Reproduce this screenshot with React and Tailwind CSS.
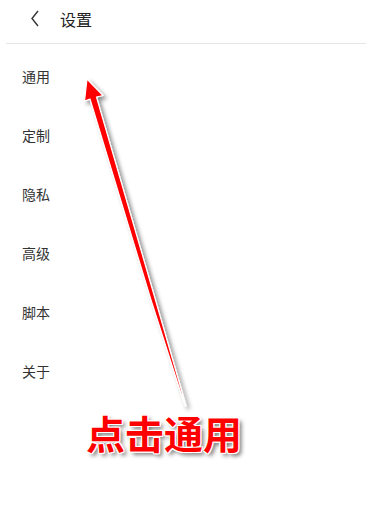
export default function App() {
  const items = ["通用", "定制", "隐私", "高级", "脚本", "关于"];
  return (
    <div
      className="relative w-[376px] h-[512px] bg-white overflow-hidden"
      style={{ fontFamily: '"Noto Sans CJK SC", "Noto Sans", sans-serif' }}
    >
      <div className="pl-[6px] pr-[10px]">
        <div className="h-[44px] pb-[6px] flex items-center border-b border-[#e6e6e6]">
          <svg width="10" height="17" viewBox="0 0 10 17" className="ml-[24px]">
            <polyline points="8,1 2,8.5 8,16" fill="none" stroke="#333" strokeWidth="1.4" />
          </svg>
          <span className="ml-[20px] text-[16px] leading-none text-[#222]">设置</span>
        </div>
        <div className="pt-[3px]">
          {items.map((t) => (
            <div key={t} className="h-[59px] flex items-center pl-[16px] text-[14px] text-[#333]">
              {t}
            </div>
          ))}
        </div>
      </div>

      <svg
        className="absolute left-0 top-0 pointer-events-none"
        width="376"
        height="512"
        viewBox="0 0 376 512"
      >
        <defs>
          <filter id="sh" x="-50%" y="-10%" width="200%" height="120%">
            <feDropShadow dx="3" dy="3" stdDeviation="2" floodColor="#000" floodOpacity="0.45" />
          </filter>
        </defs>
        <polygon
          points="87,79 103,95.5 96.5,97 155.5,300 186,406 185,406 151,300 90,99 84.5,101"
          fill="#ff0000"
          stroke="#ffffff"
          strokeWidth="1.2"
          strokeLinejoin="round"
          filter="url(#sh)"
        />
      </svg>

      <div
        className="absolute left-[86px] top-[413px] text-[39px] leading-none font-bold text-[#ff0000] whitespace-nowrap [text-shadow:1px_1px_0_#fff,-1px_-1px_0_#fff,1px_-1px_0_#fff,-1px_1px_0_#fff,0_1px_0_#fff,1px_0_0_#fff,3px_3px_4px_rgba(0,0,0,0.55)]"
      >
        点击通用
      </div>
    </div>
  );
}
